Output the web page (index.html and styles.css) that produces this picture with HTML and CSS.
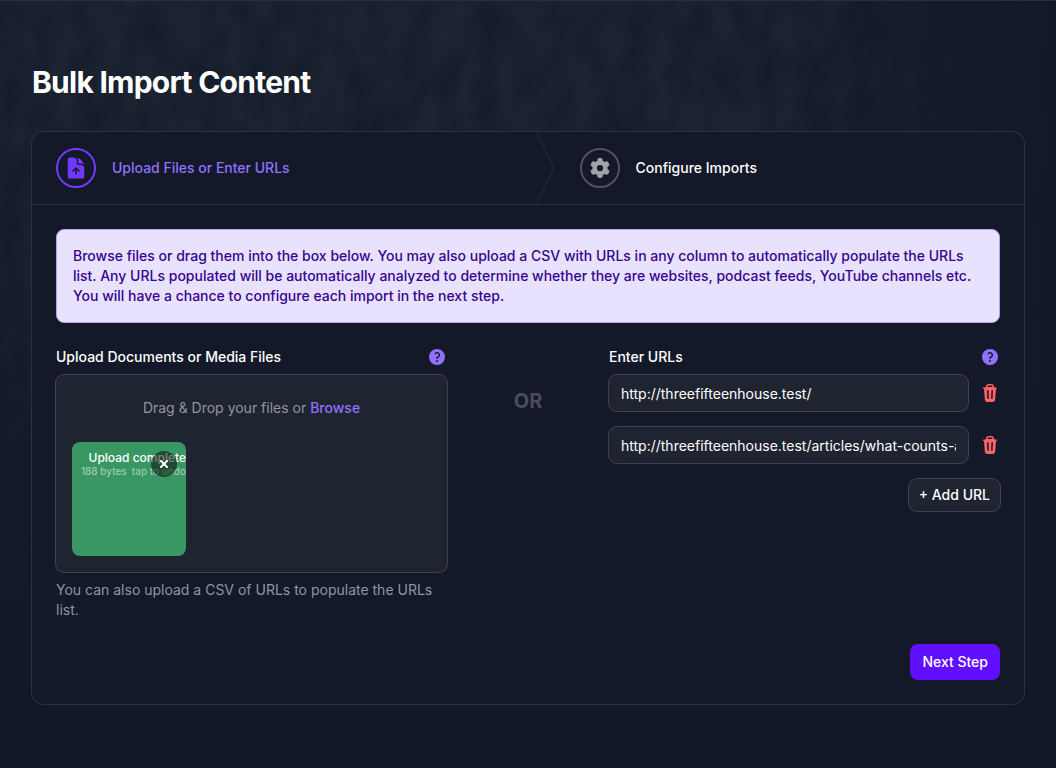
FILE: index.html
```html
<!DOCTYPE html>
<html lang="en">
<head>
<meta charset="UTF-8">
<meta name="viewport" content="width=device-width, initial-scale=1.0">
<title>Bulk Import Content</title>
<link rel="stylesheet" href="styles.css">
</head>
<body>

<main class="page">
  <h1>Bulk Import Content</h1>

  <form class="card">
    <ol class="steps">
      <li class="step active">
        <span class="step-icon">
          <svg width="24" height="24" viewBox="0 0 24 24" fill="currentColor" aria-hidden="true">
            <path fill-rule="evenodd" d="M5.625 1.5H9a3.75 3.75 0 013.75 3.75v1.875c0 1.036.84 1.875 1.875 1.875H16.5a3.75 3.75 0 013.75 3.75v7.875c0 1.035-.84 1.875-1.875 1.875H5.625a1.875 1.875 0 01-1.875-1.875V3.375c0-1.036.84-1.875 1.875-1.875zm6.905 9.97a.75.75 0 00-1.06 0l-3 3a.75.75 0 101.06 1.06l1.72-1.72V18a.75.75 0 001.5 0v-4.19l1.72 1.72a.75.75 0 101.06-1.06l-3-3z"/>
            <path d="M14.25 5.25a5.23 5.23 0 00-1.279-3.434 9.768 9.768 0 016.963 6.963A5.23 5.23 0 0016.5 7.5h-1.875a.375.375 0 01-.375-.375V5.25z"/>
          </svg>
        </span>
        <span>Upload Files or Enter URLs</span>
        <svg class="step-arrow" viewBox="0 0 22 80" fill="none" preserveAspectRatio="none" aria-hidden="true">
          <path d="M0 -2L20 40L0 82" stroke="currentColor" vector-effect="non-scaling-stroke"/>
        </svg>
      </li>
      <li class="step">
        <span class="step-icon">
          <svg width="20" height="20" viewBox="0 0 512 512" fill="currentColor" aria-hidden="true">
            <path d="M495.9 166.6c3.2 8.7 .5 18.4-6.4 24.6l-43.3 39.4c1.1 8.3 1.7 16.8 1.7 25.4s-.6 17.1-1.7 25.4l43.3 39.4c6.9 6.2 9.6 15.9 6.4 24.6c-4.4 11.9-9.7 23.3-15.8 34.3l-4.7 8.1c-6.6 11-14 21.4-22.1 31.2c-5.9 7.2-15.7 9.6-24.5 6.8l-55.7-17.7c-13.4 10.3-28.2 18.9-44 25.4l-12.5 57.1c-2 9.1-9 16.3-18.2 17.8c-13.8 2.3-28 3.5-42.5 3.5s-28.7-1.2-42.5-3.5c-9.2-1.5-16.2-8.7-18.2-17.8l-12.5-57.1c-15.8-6.5-30.6-15.1-44-25.4L83.1 425.9c-8.8 2.8-18.6 .3-24.5-6.8c-8.1-9.8-15.5-20.2-22.1-31.2l-4.7-8.1c-6.1-11-11.4-22.4-15.8-34.3c-3.2-8.7-.5-18.4 6.4-24.6l43.3-39.4C64.6 273.1 64 264.6 64 256s.6-17.1 1.7-25.4L22.4 191.2c-6.9-6.2-9.6-15.9-6.4-24.6c4.4-11.9 9.7-23.3 15.8-34.3l4.7-8.1c6.6-11 14-21.4 22.1-31.2c5.9-7.2 15.7-9.6 24.5-6.8l55.7 17.7c13.4-10.3 28.2-18.9 44-25.4l12.5-57.1c2-9.1 9-16.3 18.2-17.8C227.3 1.2 241.5 0 256 0s28.7 1.2 42.5 3.5c9.2 1.5 16.2 8.7 18.2 17.8l12.5 57.1c15.8 6.5 30.6 15.1 44 25.4l55.7-17.7c8.8-2.8 18.6-.3 24.5 6.8c8.1 9.8 15.5 20.2 22.1 31.2l4.7 8.1c6.1 11 11.4 22.4 15.8 34.3zM256 336a80 80 0 1 0 0-160 80 80 0 1 0 0 160z"/>
          </svg>
        </span>
        <span>Configure Imports</span>
      </li>
    </ol>

    <div class="card-body">
      <p class="notice">Browse files or drag them into the box below. You may also upload a CSV with URLs in any column to automatically populate the URLs list. Any URLs populated will be automatically analyzed to determine whether they are websites, podcast feeds, YouTube channels etc. You will have a chance to configure each import in the next step.</p>

      <div class="columns">
        <section>
          <div class="field-head">
            <label for="files">Upload Documents or Media Files</label>
            <button type="button" class="icon-button help" aria-label="Help">
              <svg width="20" height="20" viewBox="0 0 20 20" fill="currentColor" aria-hidden="true"><path fill-rule="evenodd" d="M18 10a8 8 0 11-16 0 8 8 0 0116 0zM8.94 6.94a.75.75 0 11-1.061-1.061 3 3 0 112.871 5.026v.345a.75.75 0 01-1.5 0v-.5c0-.72.57-1.172 1.081-1.287A1.5 1.5 0 108.94 6.94zM10 15a1 1 0 100-2 1 1 0 000 2z"/></svg>
            </button>
          </div>
          <div class="dropzone">
            <input type="file" id="files" class="file-input" multiple>
            <label for="files" class="drop-label">Drag &amp; Drop your files or <span class="browse">Browse</span></label>
            <div class="file-item">
              <div class="file-status">Upload complete</div>
              <div class="file-info"><span>188 bytes</span><span>tap to undo</span></div>
              <button type="button" class="file-remove" aria-label="Remove file">
                <svg width="8" height="8" viewBox="0 0 8 8" fill="none" stroke="currentColor" stroke-width="2" stroke-linecap="square" aria-hidden="true"><path d="M1 1l6 6M7 1L1 7"/></svg>
              </button>
            </div>
          </div>
          <p class="hint">You can also upload a CSV of URLs to populate the URLs list.</p>
        </section>

        <div class="or">OR</div>

        <section>
          <div class="field-head">
            <label for="url1">Enter URLs</label>
            <button type="button" class="icon-button help" aria-label="Help">
              <svg width="20" height="20" viewBox="0 0 20 20" fill="currentColor" aria-hidden="true"><path fill-rule="evenodd" d="M18 10a8 8 0 11-16 0 8 8 0 0116 0zM8.94 6.94a.75.75 0 11-1.061-1.061 3 3 0 112.871 5.026v.345a.75.75 0 01-1.5 0v-.5c0-.72.57-1.172 1.081-1.287A1.5 1.5 0 108.94 6.94zM10 15a1 1 0 100-2 1 1 0 000 2z"/></svg>
            </button>
          </div>
          <div class="url-list">
            <div class="url-row">
              <input type="text" id="url1" value="http://threefifteenhouse.test/">
              <button type="button" class="icon-button remove" aria-label="Remove URL">
                <svg width="20" height="20" viewBox="0 0 20 20" fill="currentColor" aria-hidden="true"><path fill-rule="evenodd" d="M8.75 1A2.75 2.75 0 006 3.75v.443c-.795.077-1.584.176-2.365.298a.75.75 0 10.23 1.482l.149-.022.841 10.518A2.75 2.75 0 007.596 19h4.807a2.75 2.75 0 002.742-2.53l.841-10.52.149.023a.75.75 0 00.23-1.482A41.03 41.03 0 0014 4.193V3.75A2.75 2.75 0 0011.25 1h-2.5zM10 4c.84 0 1.673.025 2.5.075V3.75c0-.69-.56-1.25-1.25-1.25h-2.5c-.69 0-1.25.56-1.25 1.25v.325C8.327 4.025 9.16 4 10 4zM8.58 7.72a.75.75 0 00-1.5.06l.3 7.5a.75.75 0 101.5-.06l-.3-7.5zm4.34.06a.75.75 0 10-1.5-.06l-.3 7.5a.75.75 0 101.5.06l.3-7.5z"/></svg>
              </button>
            </div>
            <div class="url-row">
              <input type="text" id="url2" aria-label="URL 2" value="http://threefifteenhouse.test/articles/what-counts-as-news">
              <button type="button" class="icon-button remove" aria-label="Remove URL">
                <svg width="20" height="20" viewBox="0 0 20 20" fill="currentColor" aria-hidden="true"><path fill-rule="evenodd" d="M8.75 1A2.75 2.75 0 006 3.75v.443c-.795.077-1.584.176-2.365.298a.75.75 0 10.23 1.482l.149-.022.841 10.518A2.75 2.75 0 007.596 19h4.807a2.75 2.75 0 002.742-2.53l.841-10.52.149.023a.75.75 0 00.23-1.482A41.03 41.03 0 0014 4.193V3.75A2.75 2.75 0 0011.25 1h-2.5zM10 4c.84 0 1.673.025 2.5.075V3.75c0-.69-.56-1.25-1.25-1.25h-2.5c-.69 0-1.25.56-1.25 1.25v.325C8.327 4.025 9.16 4 10 4zM8.58 7.72a.75.75 0 00-1.5.06l.3 7.5a.75.75 0 101.5-.06l-.3-7.5zm4.34.06a.75.75 0 10-1.5-.06l-.3 7.5a.75.75 0 101.5.06l.3-7.5z"/></svg>
              </button>
            </div>
            <button type="button" class="button add">+ Add URL</button>
          </div>
        </section>
      </div>

      <div class="actions">
        <button type="submit" class="button next">Next Step</button>
      </div>
    </div>
  </form>
</main>

</body>
</html>
```

FILE: styles.css
```css
* {
  box-sizing: border-box;
}

body {
  margin: 0;
  min-height: 100vh;
  background-color: #111827;
  /* fabric grain that fades out to the right and downwards */
  background-image:
    linear-gradient(to right, rgba(17, 24, 39, 0) 70%, #111827 100%),
    linear-gradient(to bottom, rgba(17, 24, 39, 0) 120px, #111827 620px),
    url("data:image/svg+xml,%3Csvg xmlns='http://www.w3.org/2000/svg' width='1200' height='800'%3E%3Cfilter id='n' x='0' y='0' width='1' height='1' color-interpolation-filters='sRGB'%3E%3CfeTurbulence type='fractalNoise' baseFrequency='.04 .02' numOctaves='5'/%3E%3CfeColorMatrix values='0 0 0 0 .067 0 0 0 0 .094 0 0 0 0 .153 1.6 0 0 0 -.4'/%3E%3C/filter%3E%3Crect width='1200' height='800' filter='url(%23n)' opacity='.7'/%3E%3C/svg%3E"),
    linear-gradient(#1d2432, #1d2432);
  box-shadow: inset 0 1px #282e3b;
  color: #fff;
  font-family: Inter, "Liberation Sans", sans-serif;
  font-size: 14px;
  line-height: 20px;
}

button, input {
  font: inherit;
}

h1 {
  margin: 0 0 32px;
  font-size: 30px;
  line-height: 36px;
  font-weight: 700;
  letter-spacing: -0.025em;
}

.page {
  padding: 64px 32px;
}

.card {
  border-radius: 12px;
  background-color: #131928;
  box-shadow: 0 0 0 1px #2a303d;
}

.steps {
  display: grid;
  grid-template-columns: 19fr 17fr;
  margin: 0;
  padding: 0;
  list-style: none;
  border-bottom: 1px solid #2a303d;
}

.step {
  position: relative;
  display: flex;
  align-items: center;
  gap: 16px;
  padding: 16px 24px;
  font-weight: 500;
}

.step-icon {
  display: flex;
  align-items: center;
  justify-content: center;
  width: 40px;
  height: 40px;
  border: 2px solid #52525b;
  border-radius: 50%;
  color: #a1a1aa;
}

.step.active {
  color: #9170ff;
}

.step.active .step-icon {
  border-color: #7139ff;
  color: #7139ff;
}

.step-arrow {
  position: absolute;
  top: 0;
  right: 0;
  width: 20px;
  height: 100%;
  color: #242b38;
}

.card-body {
  padding: 24px;
}

.notice {
  margin: 0 0 24px;
  padding: 16px;
  border: 1px solid #b29fff;
  border-radius: 8px;
  background-color: #e8e2ff;
  color: #36058f;
  font-weight: 500;
}

.columns {
  display: grid;
  grid-template-columns: 1fr 162px 1fr;
}

.field-head {
  display: flex;
  align-items: center;
  justify-content: space-between;
  margin-bottom: 8px;
  font-weight: 500;
}

.icon-button {
  display: flex;
  padding: 0;
  border: none;
  background: none;
  cursor: pointer;
}

.help {
  color: #9170ff;
}

.remove {
  color: #ff6467;
}

.dropzone {
  position: relative;
  padding: 16px;
  border-radius: 8px;
  background-color: #1f2431;
  box-shadow: 0 0 0 1px #3f424e;
}

.file-input {
  position: absolute;
  width: 1px;
  height: 1px;
  opacity: 0;
}

.drop-label {
  display: block;
  padding: 7px 0 24px;
  text-align: center;
  color: #9294a0;
  cursor: pointer;
}

.browse {
  color: #9170ff;
  font-weight: 500;
}

.file-item {
  position: relative;
  width: 114px;
  height: 114px;
  padding-top: 9px;
  border-radius: 8px;
  background-color: #389763;
  overflow: hidden;
  white-space: nowrap;
}

.file-status {
  display: flex;
  justify-content: flex-end;
  font-size: 12px;
  line-height: 14px;
  font-weight: 500;
}

.file-info {
  display: flex;
  justify-content: flex-end;
  gap: 5px;
  font-size: 10px;
  line-height: 12px;
  font-weight: 500;
  color: #9bcbb1;
}

.file-remove {
  position: absolute;
  top: 9px;
  right: 9px;
  display: flex;
  align-items: center;
  justify-content: center;
  width: 26px;
  height: 26px;
  padding: 0;
  border: none;
  border-radius: 50%;
  background-color: rgba(0, 0, 0, 0.5);
  color: #fff;
  cursor: pointer;
}

.hint {
  margin: 8px 0 0;
  color: #9294a0;
}

.or {
  padding-top: 40px;
  text-align: center;
  font-size: 20px;
  line-height: 28px;
  font-weight: 700;
  color: #4b4c57;
}

.url-list {
  display: flex;
  flex-direction: column;
  gap: 16px;
}

.url-row {
  display: flex;
  align-items: center;
  gap: 12px;
}

.url-row input {
  flex: 1;
  min-width: 0;
  height: 36px;
  padding: 0 12px;
  border: none;
  border-radius: 8px;
  background-color: #1f2431;
  box-shadow: 0 0 0 1px #3f424e;
  color: #fff;
}

.button {
  border: none;
  border-radius: 8px;
  color: #fff;
  font-weight: 500;
  cursor: pointer;
}

.add {
  align-self: flex-end;
  padding: 6px 10px;
  background-color: #1f2431;
  box-shadow: 0 0 0 1px #3f424e;
}

.actions {
  display: flex;
  justify-content: flex-end;
  margin-top: 24px;
}

.next {
  padding: 8px 12px;
  background-color: #610fff;
}
```
